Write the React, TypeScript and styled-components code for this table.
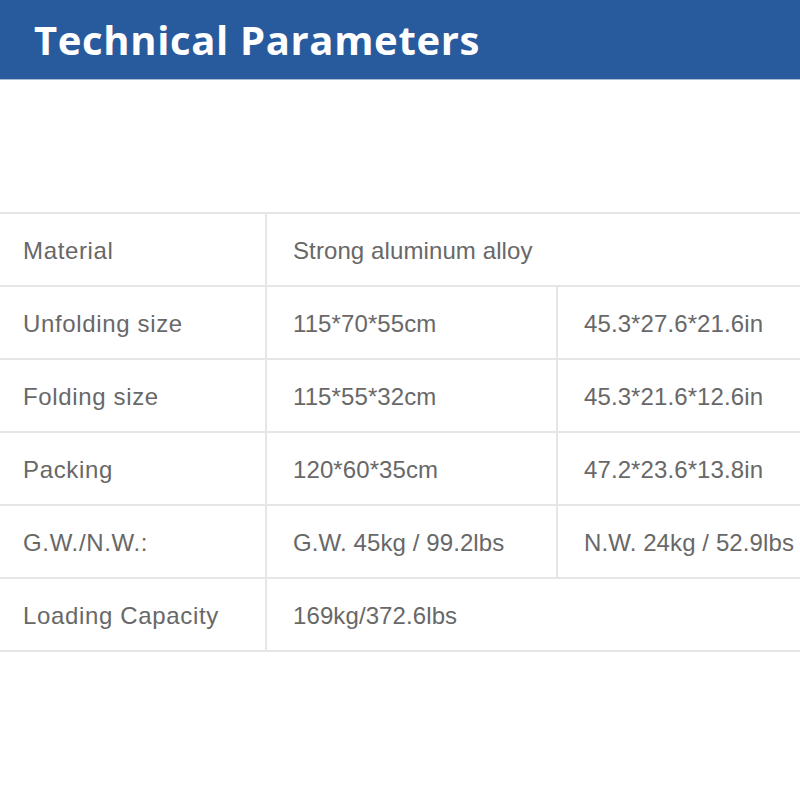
import React from "react";
import styled, { createGlobalStyle } from "styled-components";

const Global = createGlobalStyle`
  html, body { margin: 0; padding: 0; background: #ffffff; }
  body { width: 800px; height: 800px; overflow: hidden; }
`;

const Page = styled.div`
  width: 800px;
  height: 800px;
  background: #fff;
  display: flex;
  flex-direction: column;
`;

const Header = styled.header`
  height: 80px;
  box-sizing: border-box;
  background: #285a9e;
  border-bottom: 1px solid #a9bcd6;
  display: flex;
  align-items: center;
  padding-left: 34px;
`;

const Title = styled.h1`
  margin: 0;
  font-family: "Open Sans", "Noto Sans", sans-serif;
  font-weight: 700;
  font-size: 40px;
  letter-spacing: 0.65px;
  color: #ffffff;
  line-height: 1;
  padding-top: 1px;
`;

const Table = styled.div`
  margin-top: 132px;
  display: flex;
  flex-direction: column;
  border-bottom: 2px solid #e6e6e6;
`;

const Row = styled.div`
  display: grid;
  grid-template-columns: 265px 291px 1fr;
  height: 73px;
  box-sizing: border-box;
  border-top: 2px solid #e6e6e6;
`;

const Cell = styled.div<{ $span?: number; $first?: boolean }>`
  grid-column: span ${(p) => p.$span ?? 1};
  display: flex;
  align-items: center;
  box-sizing: border-box;
  padding-left: ${(p) => (p.$first ? "23px" : "26px")};
  padding-top: 3px;
  border-left: ${(p) => (p.$first ? "none" : "2px solid #e6e6e6")};
  font-family: "Liberation Sans", Arial, sans-serif;
  font-size: 24px;
  letter-spacing: ${(p) => (p.$first ? "0.65px" : "0.1px")};
  color: #686868;
  white-space: nowrap;
  overflow: hidden;
`;

type RowData = { label: string; values: string[] };

const rows: RowData[] = [
  { label: "Material", values: ["Strong aluminum alloy"] },
  { label: "Unfolding size", values: ["115*70*55cm", "45.3*27.6*21.6in"] },
  { label: "Folding size", values: ["115*55*32cm", "45.3*21.6*12.6in"] },
  { label: "Packing", values: ["120*60*35cm", "47.2*23.6*13.8in"] },
  { label: "G.W./N.W.:", values: ["G.W. 45kg / 99.2lbs", "N.W. 24kg / 52.9lbs"] },
  { label: "Loading Capacity", values: ["169kg/372.6lbs"] },
];

export default function App() {
  return (
    <Page>
      <Global />
      <Header>
        <Title>Technical Parameters</Title>
      </Header>
      <Table>
        {rows.map((r) => (
          <Row key={r.label}>
            <Cell $first>{r.label}</Cell>
            {r.values.length === 1 ? (
              <Cell $span={2}>{r.values[0]}</Cell>
            ) : (
              r.values.map((v) => <Cell key={v}>{v}</Cell>)
            )}
          </Row>
        ))}
      </Table>
    </Page>
  );
}
